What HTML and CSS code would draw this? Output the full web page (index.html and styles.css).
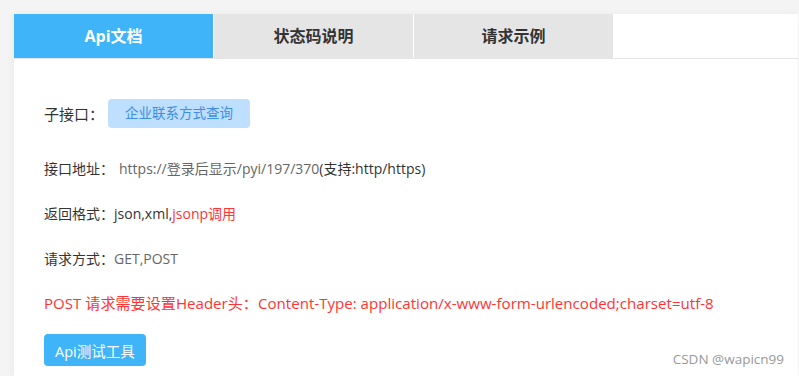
FILE: index.html
```html
<!DOCTYPE html>
<html>
    <head>
        <meta charset="UTF-8">
        <meta name="viewport" content="width=device-width, initial-scale=1.0">
        <title>Api文档</title>
        <link rel="stylesheet" href="styles.css">
    </head>
    <body>
        <div class="api-panel">
            <div class="tab-bar">
                <div class="tab-item active">Api文档</div>
                <div class="tab-item">状态码说明</div>
                <div class="tab-item">请求示例</div>
            </div>
            <div class="api-content">
                <div class="sub-row">
                    <span class="sub-label">子接口：</span>
                    <span class="sub-tag">企业联系方式查询</span>
                </div>
                <p class="info-row">接口地址：<span class="muted url">https://登录后显示/pyi/197/370</span>(支持:http/https)</p>
                <p class="info-row">返回格式：json,xml,<span class="red">jsonp调用</span></p>
                <p class="info-row">请求方式：<span class="muted">GET,POST</span></p>
                <p class="info-row red notice">POST 请求需要设置Header头：Content-Type: application/x-www-form-urlencoded;charset=utf-8</p>
                <button class="test-btn">Api测试工具</button>
            </div>
        </div>
        <div class="watermark">CSDN @wapicn99</div>
    </body>
</html>
```

FILE: styles.css
```css
body{
    margin: 0;
    padding: 14px 1px 0 14px;
    height: 100vh;
    box-sizing: border-box;
    overflow: hidden;
    background-color: #f4f4f4;
    font-family: "Open Sans", "Noto Sans CJK SC", sans-serif;
    color: #333;
}
.api-panel{
    background-color: #fff;
    height: 100%;
    box-shadow: -2px 0 6px rgba(0,0,0,0.04);
}
.tab-bar{
    display: flex;
    border-bottom: 1px solid #e5e5e5;
}
.tab-item{
    width: 199px;
    height: 44px;
    line-height: 44px;
    margin-right: 1px;
    text-align: center;
    font-size: 16px;
    font-weight: bold;
    background-color: #e5e5e5;
    color: #333;
}
.tab-item.active{
    background-color: #40b4f8;
    color: #fff;
}
.api-content{
    padding: 40px 30px 0;
}
.sub-row{
    display: flex;
    align-items: center;
    height: 29px;
}
.sub-label{
    font-size: 15px;
    margin-right: 4px;
}
.sub-tag{
    display: inline-block;
    height: 29px;
    line-height: 29px;
    padding: 0 17px;
    border-radius: 4px;
    font-size: 13.5px;
    background-color: #bfdfff;
    color: #3a8ee6;
}
.info-row{
    margin: 25px 0 0;
    font-size: 14px;
    line-height: 20px;
}
.sub-row + .info-row{
    margin-top: 31px;
}
.muted{
    color: #666;
}
.url{
    margin-left: 5px;
}
.red{
    color: #ff3333;
}
.notice{
    font-size: 15.1px;
    margin-top: 24px;
}
.test-btn{
    display: block;
    margin-top: 21px;
    height: 32px;
    padding: 0 11px;
    border: none;
    border-radius: 4px;
    background-color: #40b4f8;
    color: #fff;
    font-family: inherit;
    font-size: 14.5px;
    cursor: pointer;
}
.watermark{
    position: absolute;
    right: 15px;
    bottom: 8px;
    font-size: 13.5px;
    color: #999;
}
```
